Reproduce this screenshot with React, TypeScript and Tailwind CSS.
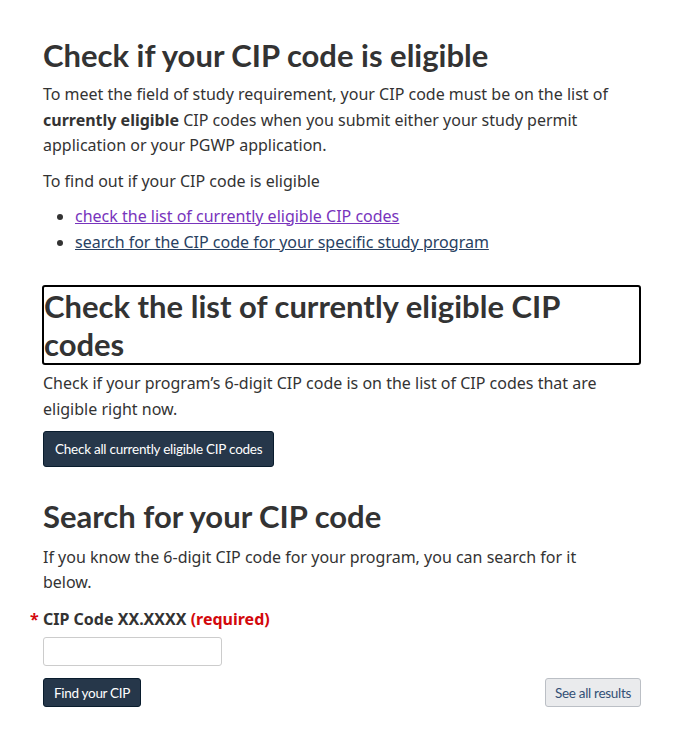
export default function App() {
  const body = { fontFamily: '"Noto Sans", sans-serif' };
  const head = { fontFamily: 'Lato, sans-serif' };
  return (
    <div className="min-h-[750px] bg-white px-[43px] pt-[35px] text-[#333]" style={body}>
      <h1 className="text-[31px] font-bold leading-[40px] text-[#333]" style={head}>
        Check if your CIP code is eligible
      </h1>
      <p className="mt-[7px] max-w-[575px] text-[16px] leading-[25.7px]">
        To meet the field of study requirement, your CIP code must be on the list of{' '}
        <strong>currently eligible</strong> CIP codes when you submit either your study permit
        application or your PGWP application.
      </p>
      <p className="mt-[10px] text-[16px] leading-[25.7px]">To find out if your CIP code is eligible</p>
      <ul className="mt-[8px] list-disc pl-[32px] text-[16px] leading-[26px]">
        <li>
          <a href="#list" className="text-[#7834bc] underline">
            check the list of currently eligible CIP codes
          </a>
        </li>
        <li>
          <a href="#search" className="text-[#284162] underline">
            search for the CIP code for your specific study program
          </a>
        </li>
      </ul>

      <h2
        id="list"
        className="-ml-px mt-[30px] rounded-[3px] border-2 border-black text-[31px] font-bold leading-[38px] text-[#333]"
        style={head}
      >
        Check the list of currently eligible CIP codes
      </h2>
      <p className="mt-[6px] max-w-[575px] text-[16px] leading-[25.7px]">
        Check if your program’s 6-digit CIP code is on the list of CIP codes that are eligible right now.
      </p>
      <button
        className="mt-[9px] h-[36px] rounded-[3px] border border-[#091c2d] bg-[#26374a] px-[11px] text-[13.5px] tracking-[-0.25px] text-white"
        style={head}
      >
        Check all currently eligible CIP codes
      </button>

      <h2
        id="search"
        className="mt-[30px] text-[31px] font-bold leading-[38px] text-[#333]"
        style={head}
      >
        Search for your CIP code
      </h2>
      <p className="mt-[10px] max-w-[575px] text-[16px] leading-[25px]">
        If you know the 6-digit CIP code for your program, you can search for it below.
      </p>
      <label className="relative mt-[12px] block text-[16px] font-bold leading-[24px]">
        <span className="absolute -left-[13px] text-[#d3080c]">*</span>
        CIP Code XX.XXXX <span className="text-[#d3080c]">(required)</span>
      </label>
      <input
        type="text"
        className="mt-[6px] block h-[29px] w-[179px] rounded-[3px] border border-[#ccc] bg-white"
      />
      <div className="mt-[12px] flex items-center justify-between">
        <button
          className="h-[29px] rounded-[3px] border border-[#091c2d] bg-[#26374a] px-[10px] text-[13.5px] tracking-[-0.3px] text-white"
          style={head}
        >
          Find your CIP
        </button>
        <button
          className="h-[29px] rounded-[3px] border border-[#bbbfc5] bg-[#eaebed] px-[9px] text-[13.5px] tracking-[-0.3px] text-[#335075]"
          style={head}
        >
          See all results
        </button>
      </div>
    </div>
  );
}
